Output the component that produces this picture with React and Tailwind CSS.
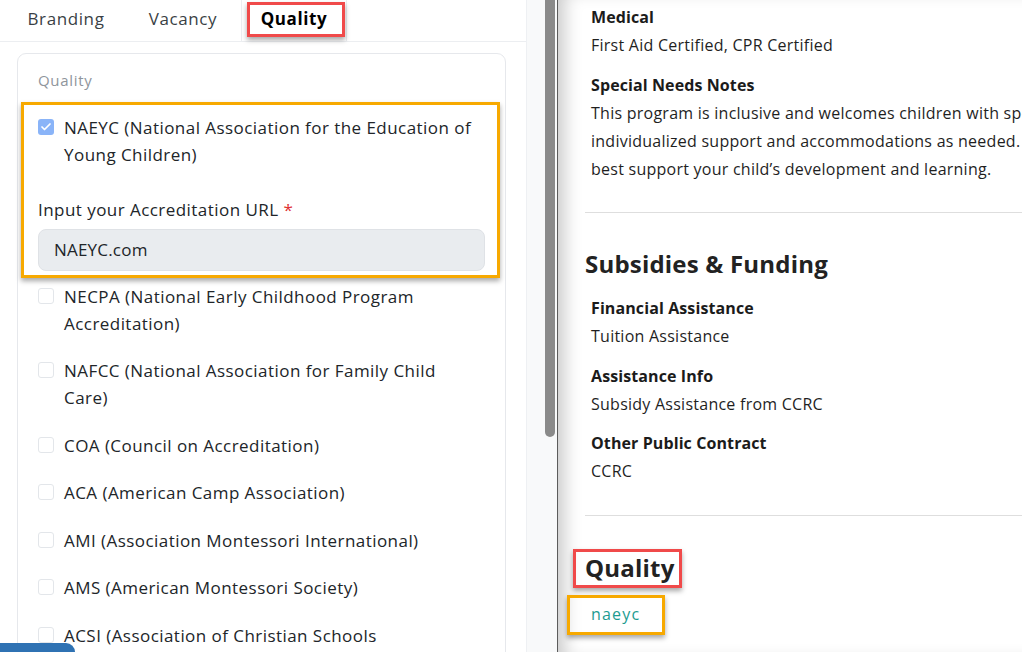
import { Check } from "lucide-react";

const accreditations = [
  { name: "NECPA (National Early Childhood Program Accreditation)" },
  { name: "NAFCC (National Association for Family Child Care)" },
  { name: "COA (Council on Accreditation)" },
  { name: "ACA (American Camp Association)" },
  { name: "AMI (Association Montessori International)" },
  { name: "AMS (American Montessori Society)" },
  { name: "ACSI (Association of Christian Schools International)" },
];

const Checkbox = ({ checked }) =>
  checked ? (
    <span className="mt-[5px] flex h-4 w-4 shrink-0 items-center justify-center rounded-[3px] bg-[#8ab4f8]">
      <Check className="h-3 w-3 text-white" strokeWidth={3.5} />
    </span>
  ) : (
    <span className="mt-[5px] h-4 w-4 shrink-0 rounded-[3px] border border-[#e3e6ea] bg-white" />
  );

const Field = ({ title, children }) => (
  <div className="pl-[6px]">
    <div className="font-bold tracking-[0.1px] text-[#1b1b1b]">{title}</div>
    <div>{children}</div>
  </div>
);

const Tab = ({ label, active, className }) => (
  <div
    className={`flex h-full items-center justify-center pb-[4px] ${className} ${
      active ? "border-x border-[#eceef1] font-bold text-black" : "text-[#3a3f45]"
    }`}>
    {label}
  </div>
);

export default function App() {
  return (
    <div className="relative flex h-[652px] w-[1022px] overflow-hidden bg-white font-['Open_Sans',sans-serif] text-[16px] text-[#212529]">
      {/* left editor */}
      <div className="flex w-[527px] shrink-0 flex-col border-r border-[#eef0f3]">
        <div className="relative flex h-[42px] shrink-0 border-b border-[#eceef1] pl-[7px] text-[17px] tracking-[0.6px]">
          <Tab label="Branding" className="w-[118px]" />
          <Tab label="Vacancy" className="w-[116px]" />
          <Tab label="Quality" active className="w-[106px]" />
          <div className="absolute left-[247px] top-[2px] h-[35px] w-[98px] border-[3px] border-[#f04a4a] shadow-[0_3px_5px_rgba(0,0,0,0.35)]" />
        </div>

        <div className="pl-[17px] pr-[20px] pt-[11px]">
          <div className="relative rounded-[9px] border border-[#e6e8ec] px-[20px] pb-6 pt-[15px] text-[17px] tracking-[0.45px]">
            <div className="text-[15px] leading-[22px] tracking-[0.7px] text-[#8f959c]">Quality</div>

            <div className="mt-[23px] flex gap-[10px] leading-[27px]">
              <Checkbox checked />
              <span>NAEYC (National Association for the Education of Young Children)</span>
            </div>
            <div className="mt-[28px] leading-[27px]">
              Input your Accreditation URL <span className="text-[#e03131]">*</span>
            </div>
            <div className="mt-[6px] flex h-[42px] items-center rounded-[8px] border border-[#dfe2e6] bg-[#e9ecef] px-[15px] tracking-[0.2px]">
              NAEYC.com
            </div>

            <div className="mt-[12px] flex flex-col gap-[20.45px] leading-[27px]">
              {accreditations.map((a) => (
                <div key={a.name} className="flex gap-[10px] pr-[36px]">
                  <Checkbox />
                  <span>{a.name}</span>
                </div>
              ))}
            </div>

            <div className="pointer-events-none absolute left-[3px] top-[48px] h-[176px] w-[479px] border-[3px] border-[#f7a900] shadow-[0_3px_5px_rgba(0,0,0,0.35)]" />
          </div>
        </div>
      </div>

      {/* scrollbar gutter */}
      <div className="flex w-[30px] shrink-0 bg-[#f8f9fa] pl-[18px]">
        <div className="h-[437px] w-[10px] rounded-b-full bg-[#8a8a8a]" />
      </div>

      {/* preview */}
      <div className="flex-1 overflow-hidden border-l border-[#5c5c5c] pl-[27px] leading-[28px] tracking-[0.25px] text-[#1f1f1f] shadow-[inset_16px_0_18px_-10px_rgba(0,0,0,0.22)]">
        <div className="flex flex-col gap-[12px] pt-[3px]">
          <Field title="Medical">First Aid Certified, CPR Certified</Field>
          <Field title="Special Needs Notes">
            <div className="whitespace-nowrap">
              <div>This program is inclusive and welcomes children with special needs. We provide</div>
              <div>individualized support and accommodations as needed. Our team works with families to</div>
              <div>best support your child’s development and learning.</div>
            </div>
          </Field>
        </div>

        <div className="mt-[29px] border-t border-[#dedede]" />

        <h2 className="mt-[35px] text-[24px] font-bold leading-[32px] tracking-[0.2px] text-[#222]">Subsidies &amp; Funding</h2>
        <div className="mt-[14px] flex flex-col gap-[11.5px]">
          <Field title="Financial Assistance">Tuition Assistance</Field>
          <Field title="Assistance Info">Subsidy Assistance from CCRC</Field>
          <Field title="Other Public Contract">CCRC</Field>
        </div>

        <div className="mt-[30px] border-t border-[#dedede]" />

        <div className="relative mt-[36px] w-fit">
          <h2 className="text-[24px] font-bold leading-[32px] tracking-[0.2px] text-[#222]">Quality</h2>
          <div className="absolute -left-[12px] -top-[3px] h-[39px] w-[109px] border-[3px] border-[#f04a4a] shadow-[0_3px_5px_rgba(0,0,0,0.35)]" />
        </div>
        <div className="relative mt-[16px] w-fit pl-[6px] tracking-[1.2px] text-[#1d9c91]">
          naeyc
          <div className="absolute -left-[18px] -top-[5px] h-[40px] w-[98px] border-[3px] border-[#f7a900] shadow-[0_3px_5px_rgba(0,0,0,0.35)]" />
        </div>
      </div>

      {/* partially hidden button */}
      <div className="absolute bottom-0 left-0 h-[9px] w-[75px] rounded-tr-[9px] bg-[#2f72b3]" />
    </div>
  );
}
